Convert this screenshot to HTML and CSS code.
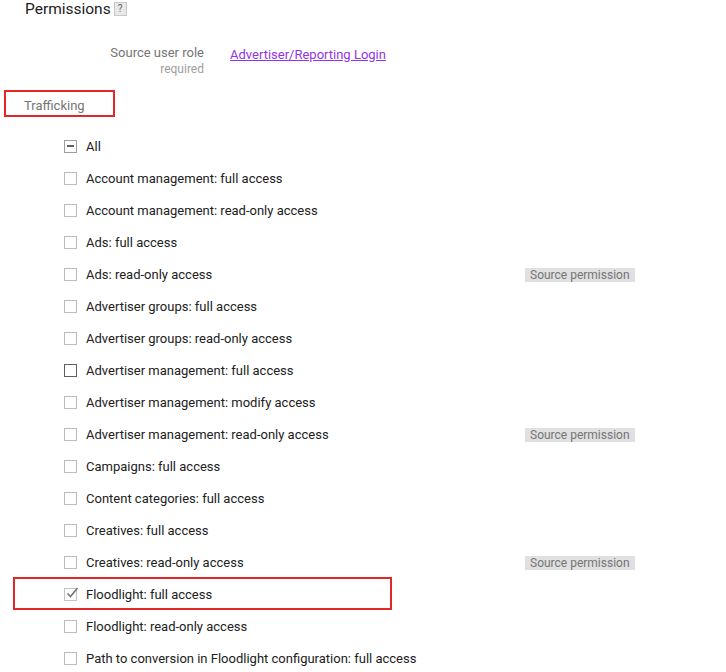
FILE: index.html
```html
<!DOCTYPE html>
<html>
<head>
<meta charset="utf-8">
<link rel="stylesheet" href="styles.css">
</head>
<body>
<div class="page">
  <h1 class="title">Permissions <span class="help">?</span></h1>

  <div class="role-row">
    <div class="role-label">
      <div class="role-name">Source user role</div>
      <div class="role-req">required</div>
    </div>
    <a class="role-link" href="#">Advertiser/Reporting Login</a>
  </div>

  <div class="section-head">Trafficking</div>

  <ul class="perm-list">
    <li class="perm"><span class="cb cb-mixed"></span><span class="perm-label">All</span></li>
    <li class="perm"><span class="cb"></span><span class="perm-label">Account management: full access</span></li>
    <li class="perm"><span class="cb"></span><span class="perm-label">Account management: read-only access</span></li>
    <li class="perm"><span class="cb"></span><span class="perm-label">Ads: full access</span></li>
    <li class="perm"><span class="cb"></span><span class="perm-label">Ads: read-only access</span><span class="badge">Source permission</span></li>
    <li class="perm"><span class="cb"></span><span class="perm-label">Advertiser groups: full access</span></li>
    <li class="perm"><span class="cb"></span><span class="perm-label">Advertiser groups: read-only access</span></li>
    <li class="perm"><span class="cb cb-dark"></span><span class="perm-label">Advertiser management: full access</span></li>
    <li class="perm"><span class="cb"></span><span class="perm-label">Advertiser management: modify access</span></li>
    <li class="perm"><span class="cb"></span><span class="perm-label">Advertiser management: read-only access</span><span class="badge">Source permission</span></li>
    <li class="perm"><span class="cb"></span><span class="perm-label">Campaigns: full access</span></li>
    <li class="perm"><span class="cb"></span><span class="perm-label">Content categories: full access</span></li>
    <li class="perm"><span class="cb"></span><span class="perm-label">Creatives: full access</span></li>
    <li class="perm"><span class="cb"></span><span class="perm-label">Creatives: read-only access</span><span class="badge">Source permission</span></li>
    <li class="perm perm-marked"><span class="cb cb-checked"><svg class="tick" width="14" height="14" viewBox="0 0 14 14"><path d="M2.5 7.5 L5.5 10.5 L12.5 2" fill="none" stroke="#757575" stroke-width="1.6"/></svg></span><span class="perm-label">Floodlight: full access</span></li>
    <li class="perm"><span class="cb"></span><span class="perm-label">Floodlight: read-only access</span></li>
    <li class="perm"><span class="cb"></span><span class="perm-label">Path to conversion in Floodlight configuration: full access</span></li>
  </ul>
</div>
</body>
</html>
```

FILE: styles.css
```css
html, body {
  margin: 0;
  padding: 0;
  background: #fff;
}
body {
  font-family: Roboto, "Noto Sans", Arial, sans-serif;
  color: #212121;
  overflow: hidden;
}
.page {
  width: 726px;
  height: 672px;
  overflow: hidden;
}
.title {
  margin: -1px 0 0 25px;
  font-size: 15.5px;
  font-weight: 400;
  line-height: 20px;
  height: 20px;
  color: #212121;
  display: flex;
  align-items: center;
  gap: 3px;
}
.help {
  display: inline-block;
  width: 11px;
  height: 12px;
  border: 1px solid #c8c8c8;
  background: #e8e8e8;
  color: #616161;
  font-size: 10px;
  line-height: 12px;
  text-align: center;
  margin-top: 0;
}
.role-row {
  display: flex;
  margin-top: 25px;
}
.role-label {
  width: 204px;
  text-align: right;
}
.role-name {
  font-size: 13px;
  line-height: 17px;
  color: #757575;
}
.role-req {
  font-size: 12px;
  line-height: 16px;
  color: #9e9e9e;
}
.role-link {
  margin-left: 26px;
  font-size: 13px;
  line-height: 21px;
  height: 21px;
  color: #9334e6;
  text-decoration: underline;
}
.section-head {
  margin: 13px 0 0 4px;
  box-sizing: border-box;
  width: 111px;
  height: 27px;
  border: 2px solid #e32626;
  padding: 3px 0 0 18px;
  font-size: 13px;
  line-height: 21px;
  color: #757575;
}
.perm-list {
  list-style: none;
  margin: 13px 0 0 0;
  padding: 0;
}
.perm {
  position: relative;
  display: flex;
  align-items: center;
  height: 32px;
  padding-left: 64px;
  font-size: 13px;
}
.cb {
  position: relative;
  box-sizing: border-box;
  width: 13px;
  height: 13px;
  border: 1px solid #bdbdbd;
  background: #fff;
  flex: none;
}
.cb-dark {
  border-color: #5f5f5f;
}
.cb-mixed {
  border-color: #9e9e9e;
}
.cb-mixed::after {
  content: "";
  position: absolute;
  left: 2px;
  top: 4px;
  width: 7px;
  height: 2px;
  background: #616161;
}
.cb-checked {
  border-color: #c4c4c4;
}
.tick {
  position: absolute;
  left: 0;
  top: -3px;
}
.perm-label {
  width: 439px;
  margin-left: 9px;
  color: #212121;
  white-space: nowrap;
}
.badge {
  background: #e0e0e0;
  color: #757575;
  font-size: 12px;
  line-height: 14px;
  padding: 0 5px;
  margin-top: 1px;
  white-space: nowrap;
}
.perm-marked::after {
  content: "";
  position: absolute;
  left: 13px;
  top: -1px;
  width: 379px;
  height: 33px;
  box-sizing: border-box;
  border: 2px solid #e32626;
}
```
